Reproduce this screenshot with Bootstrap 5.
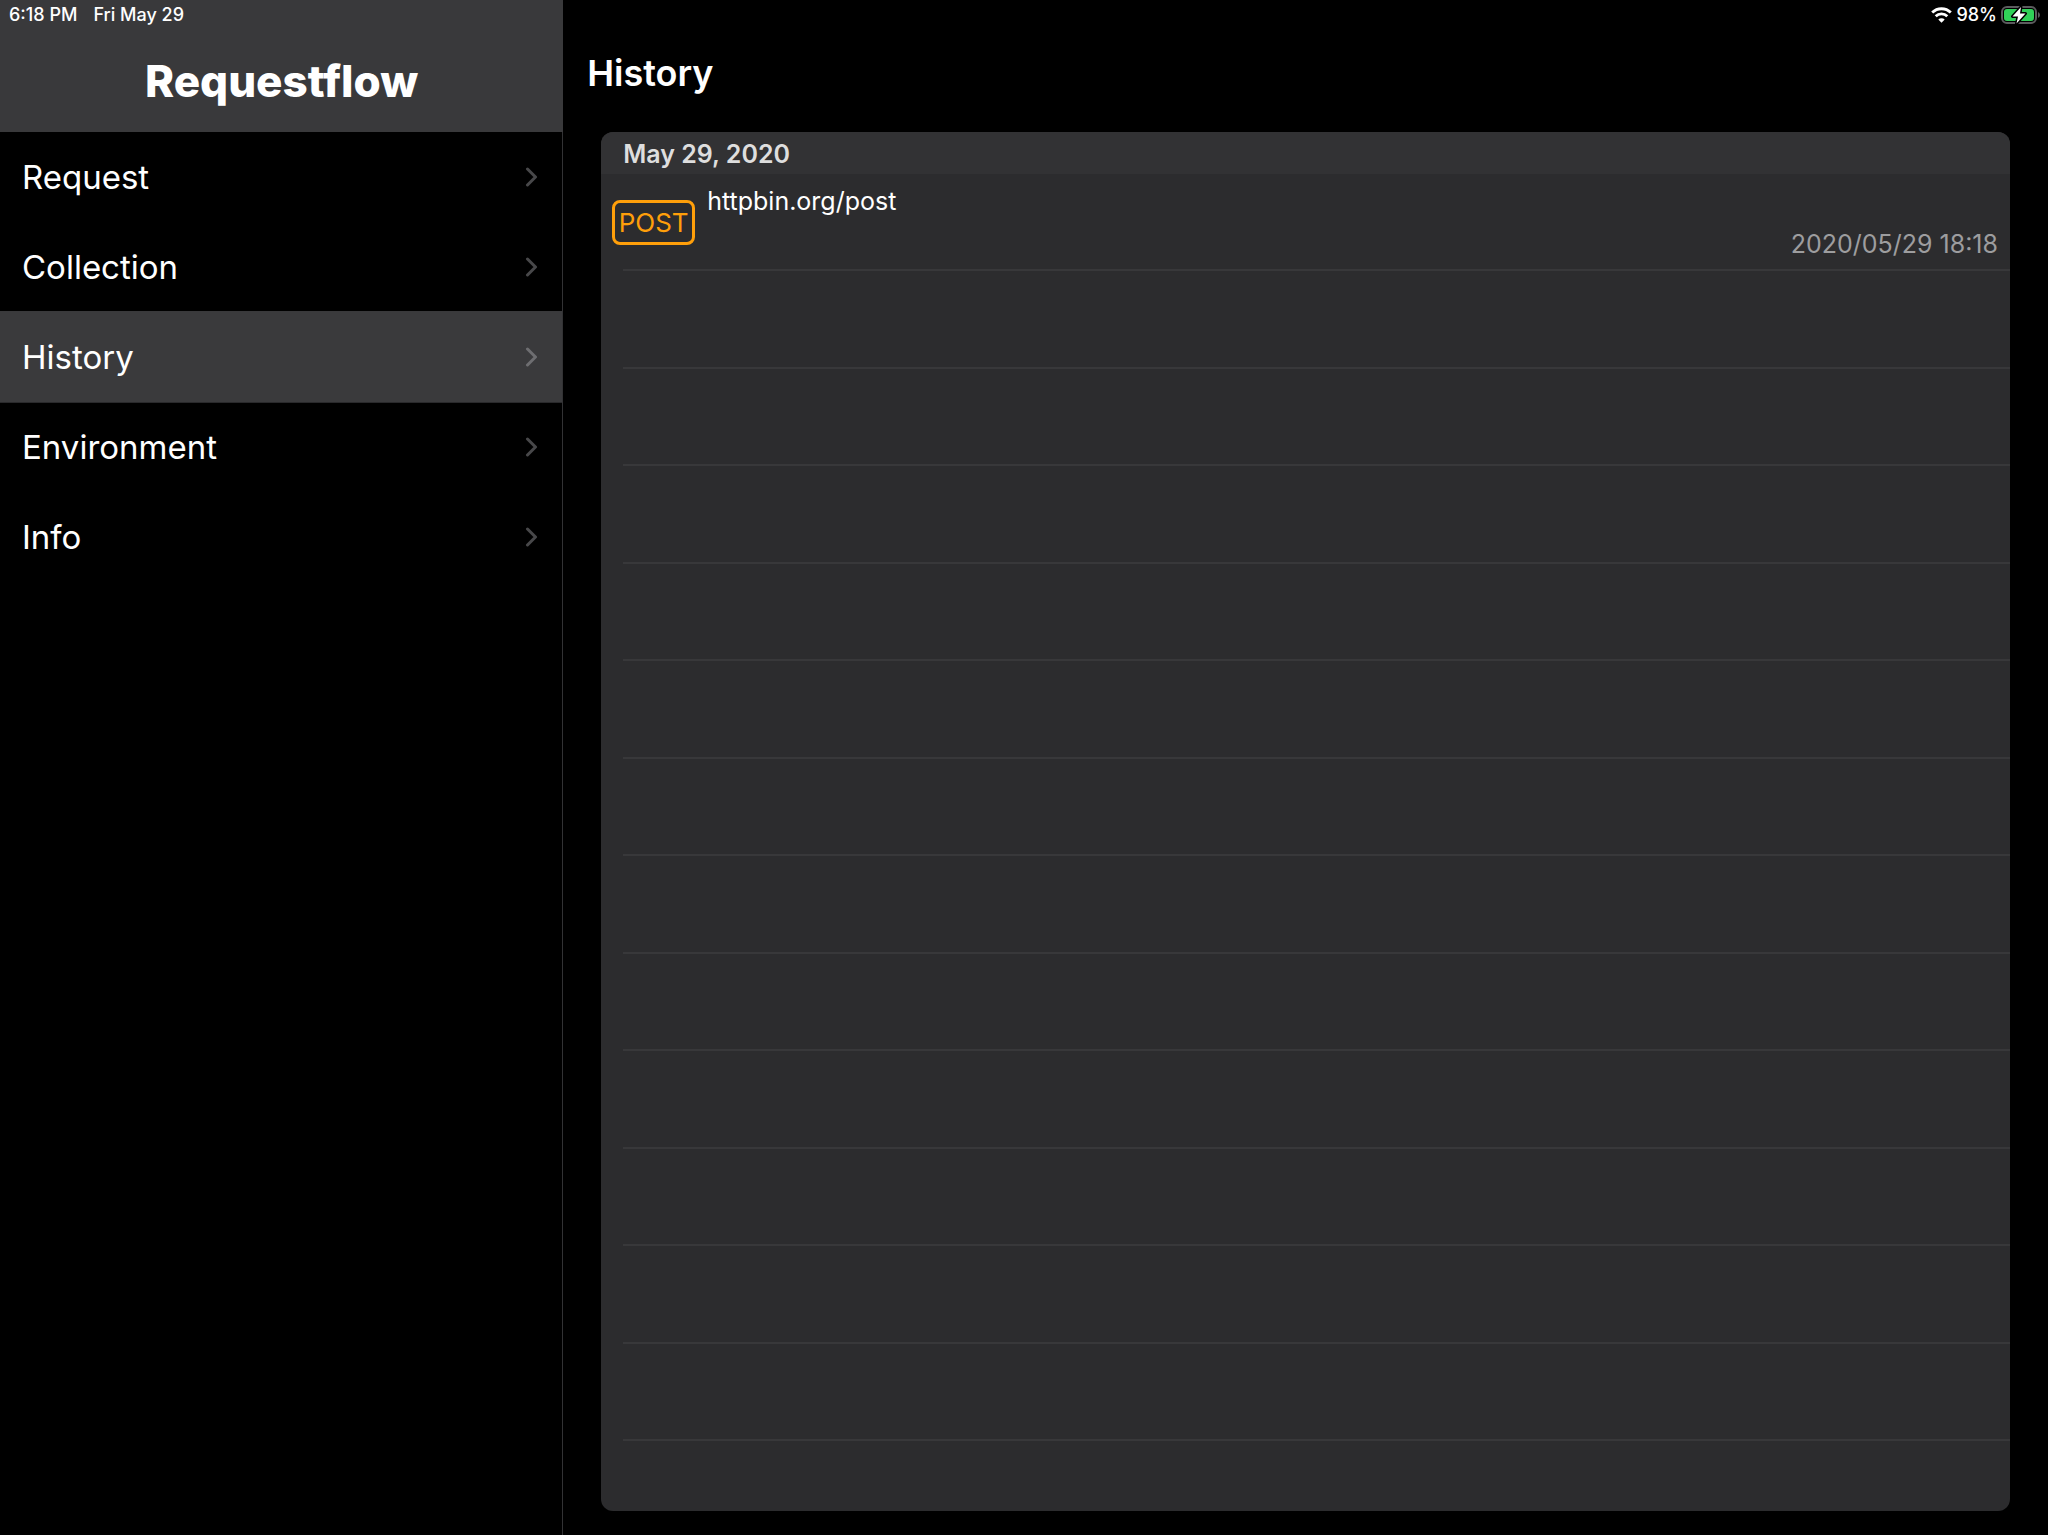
<!DOCTYPE html>
<html lang="en" data-bs-theme="dark">
<head>
<meta charset="utf-8">
<meta name="viewport" content="width=device-width, initial-scale=1">
<title>Requestflow</title>
<link href="https://cdn.jsdelivr.net/npm/bootstrap@5.3.0/dist/css/bootstrap.min.css" rel="stylesheet">
<style>
  body { background: #000; color: #fff; font-family: Inter, "Liberation Sans", sans-serif; }
  .side-pane { flex: 0 0 27.5%; border-right: 1px solid #323234; }
  .side-head { background: #39393b; height: 132px; margin-right: -1px; }
  .status-line { font-size: 18px; line-height: 30px; height: 30px; font-weight: 500; }
  .status-left { padding-left: 9px; gap: 16px; }
  .status-right { padding-right: 8px; gap: 4px; }
  .app-title { font-size: 44px; line-height: 102px; font-weight: 800; }
  .menu-link { height: 90px; padding: 2px 24px 0 22px; font-size: 33px; color: #fff; }
  .menu-link svg { color: #48484a; margin-top: -2px; }
  .menu-link.active { background: #3a3a3c; color: #fff; box-shadow: 0 -1px #39393b, 0 1px #29292b; }
  .menu-link.active svg { color: #6e6e71; }
  .page-title { font-size: 36px; line-height: 44px; font-weight: 600; padding: 21px 24px 37px; }
  .history-panel { margin: 0 38px 24px; background: #2c2c2e; border-radius: 12px; }
  .day-head { background: #323234; height: 42px; line-height: 44px; padding-left: 22px; font-size: 25px; font-weight: 600; color: #dedede; }
  .entry { flex: 1 1 0; position: relative; padding: 10px 12px 0 11px; font-size: 25px; line-height: 34px; }
  .entry::after { content: ""; position: absolute; left: 22px; right: 0; bottom: 0; height: 2px; background: #38383a; }
  .entry-tail { flex: 0 0 70px; }
  .method-tag { width: 83px; height: 45px; margin-top: 16px; border: 3px solid #ff9f0a; border-radius: 8px; color: #ff9f0a; font-size: 26px; }
  .entry-body { padding-left: 12px; }
  .entry-time { color: #9d9d9f; line-height: 38px; padding-top: 7px; }
</style>
</head>
<body>
<div class="d-flex vh-100 overflow-hidden">
  <aside class="side-pane d-flex flex-column">
    <header class="side-head">
      <div class="status-line status-left d-flex"><span>6:18 PM</span><span>Fri May 29</span></div>
      <h1 class="app-title text-center m-0">Requestflow</h1>
    </header>
    <nav class="d-flex flex-column" aria-label="Sections">
      <a href="#" class="menu-link d-flex align-items-center justify-content-between text-decoration-none">Request<svg width="13" height="20" viewBox="0 0 13 20" fill="none" stroke="currentColor" stroke-width="3" stroke-linecap="round" stroke-linejoin="round"><path d="M2.5 2 10.5 10 2.5 18"/></svg></a>
      <a href="#" class="menu-link d-flex align-items-center justify-content-between text-decoration-none">Collection<svg width="13" height="20" viewBox="0 0 13 20" fill="none" stroke="currentColor" stroke-width="3" stroke-linecap="round" stroke-linejoin="round"><path d="M2.5 2 10.5 10 2.5 18"/></svg></a>
      <a href="#" class="menu-link active d-flex align-items-center justify-content-between text-decoration-none" aria-current="page">History<svg width="13" height="20" viewBox="0 0 13 20" fill="none" stroke="currentColor" stroke-width="3" stroke-linecap="round" stroke-linejoin="round"><path d="M2.5 2 10.5 10 2.5 18"/></svg></a>
      <a href="#" class="menu-link d-flex align-items-center justify-content-between text-decoration-none">Environment<svg width="13" height="20" viewBox="0 0 13 20" fill="none" stroke="currentColor" stroke-width="3" stroke-linecap="round" stroke-linejoin="round"><path d="M2.5 2 10.5 10 2.5 18"/></svg></a>
      <a href="#" class="menu-link d-flex align-items-center justify-content-between text-decoration-none">Info<svg width="13" height="20" viewBox="0 0 13 20" fill="none" stroke="currentColor" stroke-width="3" stroke-linecap="round" stroke-linejoin="round"><path d="M2.5 2 10.5 10 2.5 18"/></svg></a>
    </nav>
  </aside>
  <main class="d-flex flex-column flex-grow-1">
    <div class="status-line status-right d-flex justify-content-end align-items-center">
      <svg width="21" height="16" viewBox="0 0 21 16" fill="none" stroke="#fff" stroke-width="2.8" aria-label="Wi-Fi"><path d="M1.2 5.6a13.2 13.2 0 0 1 18.6 0M4.7 9.2a8.2 8.2 0 0 1 11.6 0"/><path d="M10.500 15.800 7.300 12.600a4.600 4.600 0 0 1 6.400 0z" fill="#fff" stroke="none"/></svg>
      <span>98%</span>
      <svg width="39" height="20" viewBox="0 0 39 20" aria-label="Battery charging"><rect x="1" y="2" width="34" height="16" rx="5" fill="none" stroke="#5c5c5e" stroke-width="2"/><path d="M37 7q2 1 2 3t-2 3z" fill="#5c5c5e"/><rect x="3" y="4" width="30" height="12" rx="3" fill="#30d158"/><path d="M20 2 11.500 11.500h5.500L15.500 18.500 24.500 8.500h-5.500z" fill="#fff" stroke="#000" stroke-width="3" stroke-linejoin="round" paint-order="stroke"/></svg>
    </div>
    <h2 class="page-title m-0">History</h2>
    <section class="history-panel d-flex flex-column flex-grow-1 overflow-hidden">
      <h3 class="day-head m-0">May 29, 2020</h3>
      <ul class="list-unstyled m-0 d-flex flex-column flex-grow-1">
        <li class="entry d-flex align-items-start">
          <span class="method-tag d-flex align-items-center justify-content-center">POST</span>
          <div class="entry-body d-flex flex-column flex-grow-1">
            <span>httpbin.org/post</span>
            <time class="entry-time text-end" datetime="2020-05-29T18:18">2020/05/29 18:18</time>
          </div>
        </li>
        <li class="entry"></li><li class="entry"></li><li class="entry"></li><li class="entry"></li>
        <li class="entry"></li><li class="entry"></li><li class="entry"></li><li class="entry"></li>
        <li class="entry"></li><li class="entry"></li><li class="entry"></li><li class="entry"></li>
        <li class="entry-tail"></li>
      </ul>
    </section>
  </main>
</div>
<script src="https://cdn.jsdelivr.net/npm/bootstrap@5.3.0/dist/js/bootstrap.bundle.min.js"></script>
</body>
</html>
